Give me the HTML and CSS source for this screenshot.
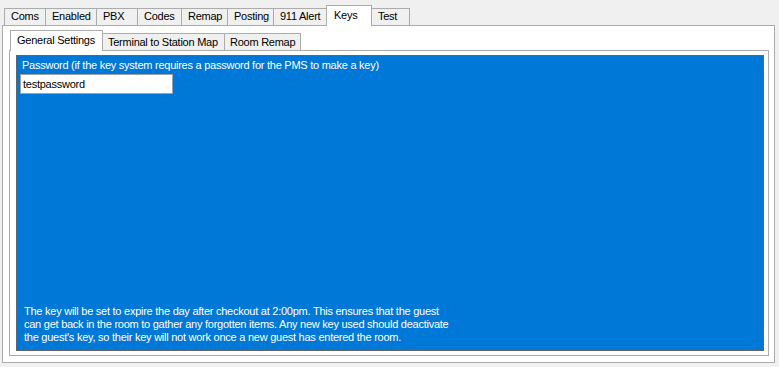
FILE: index.html
```html
<!DOCTYPE html>
<html lang="en">
<head>
    <meta charset="UTF-8">
    <title>Keys</title>
    <link rel="stylesheet" href="styles.css">
</head>

<body>
    <div class="window">
        <ul class="tabs">
            <li class="t-coms">Coms</li>
            <li class="t-enabled">Enabled</li>
            <li class="t-pbx">PBX</li>
            <li class="t-codes">Codes</li>
            <li class="t-remap">Remap</li>
            <li class="t-posting">Posting</li>
            <li class="t-alert">911 Alert</li>
            <li class="t-keys active">Keys</li>
            <li class="t-test">Test</li>
        </ul>
        <div class="page">
            <ul class="subtabs">
                <li class="s-general active">General Settings</li>
                <li class="s-terminal">Terminal to Station Map</li>
                <li class="s-room">Room Remap</li>
            </ul>
            <div class="subpage">
                <div class="blue">
                    <label class="lbl" for="pwd">Password (if the key system requires a password for the PMS to make a key)</label>
                    <input class="txt" id="pwd" type="text" value="testpassword">
                    <p class="note">The key will be set to expire the day after checkout at 2:00pm. This ensures that the guest<br>
                        can get back in the room to gather any forgotten items. Any new key used should deactivate<br>
                        the guest's key, so their key will not work once a new guest has entered the room.</p>
                </div>
            </div>
        </div>
    </div>
</body>

</html>
```

FILE: styles.css
```css
* {
    margin: 0;
    padding: 0;
    box-sizing: border-box;
}

body {
    background-color: #f0f0f0;
    font-family: "Liberation Sans", Arial, sans-serif;
    font-size: 11px;
    letter-spacing: -0.25px;
    color: #000;
}

.window {
    padding: 5px 0 0 2px;
}

/* 外层选项卡 */
.tabs {
    list-style: none;
    display: flex;
    align-items: flex-end;
    height: 20px;
    padding-left: 2px;
}

.tabs li {
    height: 17px;
    line-height: 15px;
    padding-left: 6px;
    border: 1px solid #acacac;
    border-bottom: none;
    margin-right: -1px;
    background-color: #f0f0f0;
    white-space: nowrap;
}

.tabs li.active {
    height: 21px;
    margin-bottom: -1px;
    padding-left: 7px;
    line-height: 18px;
    background-color: #fff;
    position: relative;
    z-index: 1;
}

.t-coms { width: 42px; }
.t-enabled { width: 52px; }
.t-pbx { width: 42px; }
.t-codes { width: 45px; }
.t-remap { width: 47px; }
.t-posting { width: 47px; }
.t-alert { width: 54px; }
.tabs .t-keys { width: 46px; }
.t-test { width: 39px; }

.page {
    width: 773px;
    height: 338px;
    border: 1px solid #acacac;
    background-color: #fff;
    padding: 4px 0 0 6px;
}

/* 内层选项卡 */
.subtabs {
    list-style: none;
    display: flex;
    align-items: flex-end;
    height: 20px;
    padding-left: 1px;
}

.subtabs li {
    height: 17px;
    line-height: 16px;
    padding-left: 5px;
    border: 1px solid #acacac;
    border-bottom: none;
    margin-right: -1px;
    background-color: #f0f0f0;
    white-space: nowrap;
}

.subtabs li.active {
    height: 21px;
    margin-bottom: -1px;
    padding-left: 6px;
    line-height: 18px;
    background-color: #fff;
    position: relative;
    z-index: 1;
}

.s-general { width: 93px; }
.s-terminal { width: 123px; }
.s-room { width: 77px; }

.subpage {
    width: 760px;
    height: 306px;
    border: 1px solid #acacac;
    padding: 4px 4px 4px 6px;
}

.blue {
    height: 296px;
    border: 1px solid #646464;
    background-color: #0078d7;
    color: #fff;
    display: flex;
    flex-direction: column;
    align-items: flex-start;
    padding: 3px 0 6px 3px;
}

.lbl {
    padding-left: 2px;
    line-height: 13px;
}

.txt {
    margin-top: 2px;
    width: 153px;
    height: 20px;
    border: 1px solid #a0a0a0;
    padding: 0 2px;
    font-family: inherit;
    font-size: 11px;
    letter-spacing: -0.25px;
    color: #000;
    outline: none;
}

.note {
    margin-top: auto;
    padding-left: 4px;
    line-height: 13px;
}
```
